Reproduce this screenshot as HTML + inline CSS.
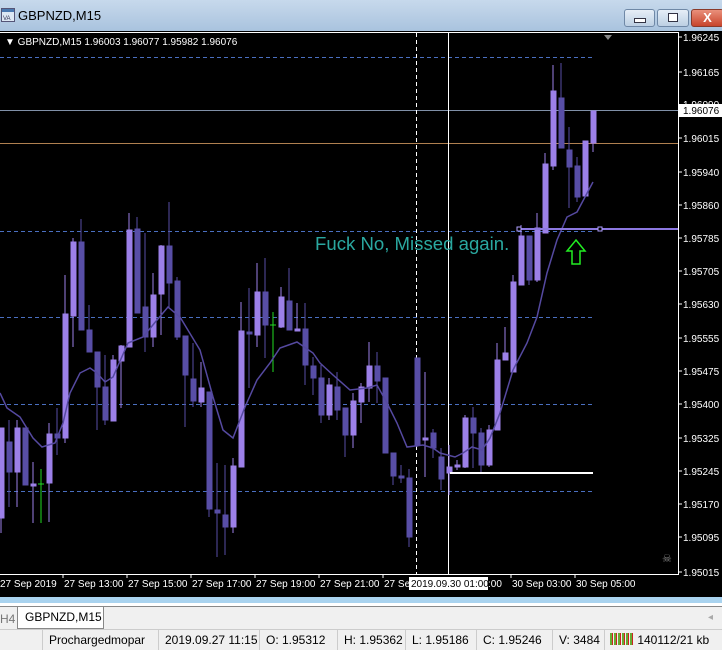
<!DOCTYPE html>
<html><head><meta charset="utf-8"><style>
body{margin:0;width:722px;height:650px;overflow:hidden;background:#f0f0f0;font-family:"Liberation Sans",sans-serif;position:relative}
.t{position:absolute;left:0;top:0;width:722px;height:31px;background:linear-gradient(#c7d9ec,#a9c3de)}
.b{position:absolute;top:9px;height:16px;border:1px solid #6f88a6;border-radius:3px;background:linear-gradient(#e6eef7,#bccfe3)}
.s{position:absolute;top:630px;height:20px;font-size:12px;line-height:20px;color:#000;border-left:1px solid #ccc;padding-left:6px}
</style></head><body>
<div class="t"><svg style="position:absolute;left:1px;top:8px" width="14" height="14"><rect x="0.5" y="0.5" width="13" height="13" fill="#dde8f4" stroke="#557"/><rect x="1" y="1" width="12" height="3" fill="#4a78b0"/><text x="2" y="12" font-size="6" fill="#335">VA</text></svg>
<div style="position:absolute;left:18px;top:8px;font-size:13px;color:#000">GBPNZD,M15</div>
<div class="b" style="left:624px;width:29px"><div style="position:absolute;left:9px;top:8px;width:10px;height:3px;border:1px solid #334;background:#fff"></div></div>
<div class="b" style="left:657px;width:30px"><div style="position:absolute;left:10px;top:3px;width:8px;height:7px;border:1px solid #334;background:#fff"></div></div>
<div class="b" style="left:691px;width:31px;background:linear-gradient(#e9907c,#c8452c);border-color:#8a3a2a;color:#fff;font-weight:bold;font-size:13px;text-align:center;line-height:16px">X</div>
</div>
<svg style="position:absolute;left:0;top:31px" width="722" height="566" viewBox="0 31 722 566">
<rect x="0" y="31" width="722" height="566" fill="#000"/>
<line x1="0" y1="32.5" x2="678" y2="32.5" stroke="#fff"/>
<line x1="678.5" y1="32" x2="678.5" y2="574" stroke="#fff"/>
<line x1="0" y1="574.5" x2="679" y2="574.5" stroke="#fff"/>
<g stroke="#4a6fc0" stroke-dasharray="4,3">
<line x1="0" y1="57.5" x2="595" y2="57.5"/><line x1="0" y1="231.5" x2="595" y2="231.5"/><line x1="0" y1="317.5" x2="595" y2="317.5"/><line x1="0" y1="404.5" x2="595" y2="404.5"/><line x1="0" y1="491.5" x2="595" y2="491.5"/></g>
<line x1="0" y1="110.5" x2="678" y2="110.5" stroke="#8090a8"/>
<line x1="0" y1="143.5" x2="678" y2="143.5" stroke="#b08050"/>
<line x1="416.5" y1="33" x2="416.5" y2="574" stroke="#fff" stroke-dasharray="4,3"/>
<line x1="448.5" y1="33" x2="448.5" y2="574" stroke="#fff"/>
<polygon points="604,35 612,35 608,40" fill="#888"/>
<g stroke="#584ea6" fill="#584ea6">
<line x1="9" y1="420" x2="9" y2="507"/><rect x="7" y="442" width="5" height="30"/>
<line x1="25" y1="428" x2="25" y2="485"/><rect x="23" y="428" width="5" height="57"/>
<line x1="57" y1="408" x2="57" y2="455"/><rect x="55" y="434" width="5" height="4"/>
<line x1="81" y1="219" x2="81" y2="330"/><rect x="79" y="242" width="5" height="88"/>
<line x1="89" y1="305" x2="89" y2="352"/><rect x="87" y="330" width="5" height="22"/>
<line x1="97" y1="352" x2="97" y2="430"/><rect x="95" y="352" width="5" height="35"/>
<line x1="105" y1="355" x2="105" y2="425"/><rect x="103" y="387" width="5" height="33"/>
<line x1="137" y1="217" x2="137" y2="313"/><rect x="135" y="229" width="5" height="84"/>
<line x1="145" y1="233" x2="145" y2="352"/><rect x="143" y="307" width="5" height="30"/>
<line x1="169" y1="202" x2="169" y2="308"/><rect x="167" y="246" width="5" height="37"/>
<line x1="177" y1="277" x2="177" y2="340"/><rect x="175" y="281" width="5" height="56"/>
<line x1="185" y1="336" x2="185" y2="427"/><rect x="183" y="336" width="5" height="39"/>
<line x1="193" y1="343" x2="193" y2="407"/><rect x="191" y="379" width="5" height="22"/>
<line x1="209" y1="392" x2="209" y2="517"/><rect x="207" y="392" width="5" height="117"/>
<line x1="217" y1="463" x2="217" y2="557"/><rect x="215" y="510" width="5" height="3"/>
<line x1="225" y1="465" x2="225" y2="555"/><rect x="223" y="515" width="5" height="12"/>
<line x1="249" y1="288" x2="249" y2="388"/><rect x="247" y="332" width="5" height="2"/>
<line x1="265" y1="258" x2="265" y2="358"/><rect x="263" y="292" width="5" height="33"/>
<line x1="289" y1="268" x2="289" y2="330"/><rect x="287" y="301" width="5" height="29"/>
<line x1="305" y1="303" x2="305" y2="385"/><rect x="303" y="329" width="5" height="36"/>
<line x1="313" y1="357" x2="313" y2="395"/><rect x="311" y="366" width="5" height="12"/>
<line x1="321" y1="365" x2="321" y2="423"/><rect x="319" y="378" width="5" height="37"/>
<line x1="337" y1="372" x2="337" y2="420"/><rect x="335" y="387" width="5" height="23"/>
<line x1="345" y1="408" x2="345" y2="457"/><rect x="343" y="408" width="5" height="27"/>
<line x1="377" y1="352" x2="377" y2="403"/><rect x="375" y="366" width="5" height="15"/>
<line x1="385" y1="378" x2="385" y2="453"/><rect x="383" y="378" width="5" height="75"/>
<line x1="393" y1="453" x2="393" y2="485"/><rect x="391" y="453" width="5" height="23"/>
<line x1="401" y1="465" x2="401" y2="483"/><rect x="399" y="476" width="5" height="2"/>
<line x1="409" y1="469" x2="409" y2="547"/><rect x="407" y="478" width="5" height="59"/>
<line x1="417" y1="358" x2="417" y2="447"/><rect x="415" y="358" width="5" height="87"/>
<line x1="433" y1="429" x2="433" y2="458"/><rect x="431" y="433" width="5" height="15"/>
<line x1="441" y1="448" x2="441" y2="490"/><rect x="439" y="457" width="5" height="22"/>
<line x1="473" y1="407" x2="473" y2="468"/><rect x="471" y="418" width="5" height="15"/>
<line x1="481" y1="428" x2="481" y2="472"/><rect x="479" y="433" width="5" height="32"/>
<line x1="529" y1="236" x2="529" y2="285"/><rect x="527" y="236" width="5" height="44"/>
<line x1="561" y1="63" x2="561" y2="148"/><rect x="559" y="98" width="5" height="50"/>
<line x1="569" y1="127" x2="569" y2="208"/><rect x="567" y="150" width="5" height="17"/>
<line x1="577" y1="157" x2="577" y2="202"/><rect x="575" y="166" width="5" height="31"/>
</g>
<g stroke="#9c80e8" fill="#9c80e8">
<line x1="1" y1="428" x2="1" y2="533"/><rect x="-1" y="428" width="5" height="90"/>
<line x1="17" y1="420" x2="17" y2="507"/><rect x="15" y="428" width="5" height="44"/>
<line x1="33" y1="462" x2="33" y2="523"/><rect x="31" y="484" width="5" height="2"/>
<line x1="49" y1="423" x2="49" y2="522"/><rect x="47" y="434" width="5" height="49"/>
<line x1="65" y1="275" x2="65" y2="443"/><rect x="63" y="314" width="5" height="124"/>
<line x1="73" y1="238" x2="73" y2="347"/><rect x="71" y="242" width="5" height="74"/>
<line x1="113" y1="355" x2="113" y2="421"/><rect x="111" y="360" width="5" height="61"/>
<line x1="121" y1="345" x2="121" y2="408"/><rect x="119" y="346" width="5" height="15"/>
<line x1="129" y1="213" x2="129" y2="347"/><rect x="127" y="230" width="5" height="117"/>
<line x1="153" y1="273" x2="153" y2="347"/><rect x="151" y="295" width="5" height="42"/>
<line x1="161" y1="245" x2="161" y2="335"/><rect x="159" y="246" width="5" height="48"/>
<line x1="201" y1="362" x2="201" y2="407"/><rect x="199" y="388" width="5" height="14"/>
<line x1="233" y1="458" x2="233" y2="533"/><rect x="231" y="466" width="5" height="61"/>
<line x1="241" y1="302" x2="241" y2="467"/><rect x="239" y="331" width="5" height="136"/>
<line x1="257" y1="263" x2="257" y2="347"/><rect x="255" y="292" width="5" height="43"/>
<line x1="281" y1="287" x2="281" y2="328"/><rect x="279" y="297" width="5" height="30"/>
<line x1="297" y1="303" x2="297" y2="330"/><rect x="295" y="329" width="5" height="2"/>
<line x1="329" y1="378" x2="329" y2="420"/><rect x="327" y="385" width="5" height="30"/>
<line x1="353" y1="393" x2="353" y2="448"/><rect x="351" y="401" width="5" height="34"/>
<line x1="361" y1="383" x2="361" y2="423"/><rect x="359" y="387" width="5" height="15"/>
<line x1="369" y1="342" x2="369" y2="402"/><rect x="367" y="366" width="5" height="22"/>
<line x1="425" y1="372" x2="425" y2="477"/><rect x="423" y="438" width="5" height="2"/>
<line x1="449" y1="445" x2="449" y2="495"/><rect x="447" y="467" width="5" height="6"/>
<line x1="457" y1="460" x2="457" y2="470"/><rect x="455" y="465" width="5" height="2"/>
<line x1="465" y1="415" x2="465" y2="468"/><rect x="463" y="418" width="5" height="49"/>
<line x1="489" y1="425" x2="489" y2="467"/><rect x="487" y="430" width="5" height="35"/>
<line x1="497" y1="343" x2="497" y2="430"/><rect x="495" y="360" width="5" height="70"/>
<line x1="505" y1="327" x2="505" y2="360"/><rect x="503" y="353" width="5" height="7"/>
<line x1="513" y1="275" x2="513" y2="372"/><rect x="511" y="282" width="5" height="90"/>
<line x1="521" y1="225" x2="521" y2="285"/><rect x="519" y="236" width="5" height="49"/>
<line x1="537" y1="213" x2="537" y2="282"/><rect x="535" y="228" width="5" height="52"/>
<line x1="545" y1="153" x2="545" y2="233"/><rect x="543" y="164" width="5" height="69"/>
<line x1="553" y1="65" x2="553" y2="170"/><rect x="551" y="91" width="5" height="75"/>
<line x1="585" y1="141" x2="585" y2="196"/><rect x="583" y="141" width="5" height="55"/>
<line x1="593" y1="111" x2="593" y2="152"/><rect x="591" y="111" width="5" height="32"/>
</g>
<g stroke="#22dd22"><line x1="41" y1="469" x2="41" y2="523"/><line x1="38" y1="484" x2="44" y2="484"/><line x1="273" y1="312" x2="273" y2="372"/><line x1="270" y1="325" x2="276" y2="325"/></g>
<polyline fill="none" stroke="#5549a0" stroke-width="1.5" points="0,393 7,408 20,417 33,438 42,447 55,443 63,423 70,393 80,373 90,368 97,373 105,382 113,377 128,343 143,337 157,320 168,307 180,317 200,350 213,397 223,430 233,438 245,407 257,380 270,363 280,348 297,342 313,353 320,363 333,375 350,390 367,388 377,385 387,403 397,423 407,447 423,445 433,448 440,453 455,457 463,453 472,447 482,450 490,438 500,413 513,370 527,343 537,317 547,273 557,240 567,217 577,212 585,197 593,182"/>
<line x1="519" y1="229" x2="678" y2="229" stroke="#8c78e0" stroke-width="2"/>
<rect x="517" y="227" width="4" height="4" fill="#000" stroke="#b0a0ff"/><rect x="598" y="227" width="4" height="4" fill="#000" stroke="#b0a0ff"/>
<line x1="450" y1="473" x2="593" y2="473" stroke="#fff" stroke-width="2"/>
<text x="315" y="250" font-size="18.6" fill="#2aa8a0" font-family="Liberation Sans">Fuck No, Missed again.</text>
<polygon points="576,240 585,251 580,251 580,264 572,264 572,251 567,251" fill="none" stroke="#22ee22" stroke-width="1.5"/>
<g font-size="10" fill="#fff" font-family="Liberation Sans">
<text x="5" y="45">▼ GBPNZD,M15  1.96003 1.96077 1.95982 1.96076</text>
<g stroke="#fff"><line x1="678" y1="37" x2="682" y2="37"/><line x1="678" y1="72" x2="682" y2="72"/><line x1="678" y1="138" x2="682" y2="138"/><line x1="678" y1="172" x2="682" y2="172"/><line x1="678" y1="205" x2="682" y2="205"/><line x1="678" y1="238" x2="682" y2="238"/><line x1="678" y1="271" x2="682" y2="271"/><line x1="678" y1="304" x2="682" y2="304"/><line x1="678" y1="338" x2="682" y2="338"/><line x1="678" y1="371" x2="682" y2="371"/><line x1="678" y1="404" x2="682" y2="404"/><line x1="678" y1="438" x2="682" y2="438"/><line x1="678" y1="471" x2="682" y2="471"/><line x1="678" y1="504" x2="682" y2="504"/><line x1="678" y1="537" x2="682" y2="537"/><line x1="678" y1="572" x2="682" y2="572"/></g>
<text x="683" y="41">1.96245</text><text x="683" y="76">1.96165</text><text x="683" y="108">1.96090</text><text x="683" y="142">1.96015</text><text x="683" y="176">1.95940</text><text x="683" y="209">1.95860</text><text x="683" y="242">1.95785</text><text x="683" y="275">1.95705</text><text x="683" y="308">1.95630</text><text x="683" y="342">1.95555</text><text x="683" y="375">1.95475</text><text x="683" y="408">1.95400</text><text x="683" y="442">1.95325</text><text x="683" y="475">1.95245</text><text x="683" y="508">1.95170</text><text x="683" y="541">1.95095</text><text x="683" y="576">1.95015</text>
<rect x="679" y="104" width="43" height="13" fill="#fff"/><text x="683" y="114" fill="#000">1.96076</text>
<g stroke="#fff"><line x1="63" y1="574" x2="63" y2="578"/><line x1="127" y1="574" x2="127" y2="578"/><line x1="191" y1="574" x2="191" y2="578"/><line x1="255" y1="574" x2="255" y2="578"/><line x1="319" y1="574" x2="319" y2="578"/><line x1="383" y1="574" x2="383" y2="578"/><line x1="511" y1="574" x2="511" y2="578"/><line x1="575" y1="574" x2="575" y2="578"/></g>
<text x="0" y="587">27 Sep 2019</text><text x="64" y="587">27 Sep 13:00</text><text x="128" y="587">27 Sep 15:00</text><text x="192" y="587">27 Sep 17:00</text><text x="256" y="587">27 Sep 19:00</text><text x="320" y="587">27 Sep 21:00</text><text x="384" y="587">27 Se</text><text x="488" y="587">:00</text><text x="512" y="587">30 Sep 03:00</text><text x="576" y="587">30 Sep 05:00</text>
<rect x="409" y="577" width="79" height="13" fill="#fff"/><text x="411" y="587" fill="#000">2019.09.30 01:00</text>
<text x="662" y="562" fill="#888" font-size="11">☠</text>
</g>
</svg>
<div style="position:absolute;left:0;top:597px;width:722px;height:6px;background:#a9d3ef"></div>
<div style="position:absolute;left:0;top:603px;width:722px;height:3px;background:#fff;border-bottom:1px solid #888"></div>
<div style="position:absolute;left:0;top:607px;width:722px;height:22px;background:#f0f0f0;border-bottom:1px solid #ccc"></div>
<div style="position:absolute;left:0;top:612px;font-size:12px;color:#777">H4</div>
<div style="position:absolute;left:17px;top:607px;width:78px;height:21px;background:#fff;border:1px solid #888;border-top:none;font-size:12px;line-height:21px;padding-left:7px">GBPNZD,M15</div>
<div style="position:absolute;left:708px;top:612px;font-size:10px;color:#aaa">◂</div>
<div class="s" style="left:42px">Prochargedmopar</div>
<div class="s" style="left:158px">2019.09.27 11:15</div>
<div class="s" style="left:259px">O: 1.95312</div>
<div class="s" style="left:337px">H: 1.95362</div>
<div class="s" style="left:405px">L: 1.95186</div>
<div class="s" style="left:476px">C: 1.95246</div>
<div class="s" style="left:552px">V: 3484</div>
<div class="s" style="left:604px;padding-left:5px"><span style="display:inline-block;width:24px;height:12px;vertical-align:-1px;background:repeating-linear-gradient(90deg,#6a3 0 2px,#c22 2px 3px,#f0f0f0 3px 4px)"></span> 140112/21 kb</div>
</body></html>
